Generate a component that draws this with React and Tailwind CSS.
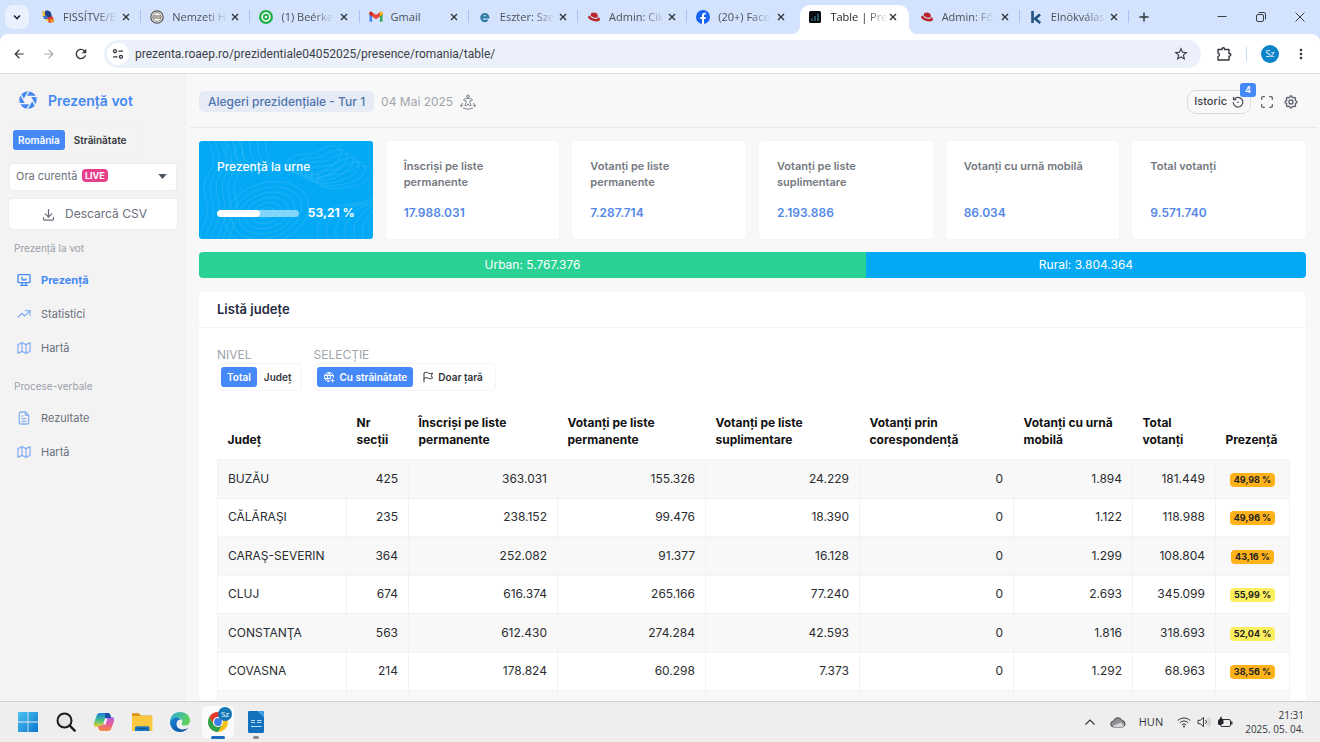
import { Fragment } from "react";
import {
  TbDeviceDesktopAnalytics,
  TbTrendingUp,
  TbMap,
  TbFileText,
  TbDownload,
  TbMaximize,
  TbSettings,
  TbWorldPlus,
} from "react-icons/tb";
import { FaRedhat } from "react-icons/fa";
import {
  MdArrowBack,
  MdArrowForward,
  MdRefresh,
  MdStarBorder,
  MdMoreVert,
} from "react-icons/md";

/* ---------- favicons ---------- */

const FlagIcon = () => (
  <svg viewBox="0 0 14 14" className="size-3.5">
    <path d="M1 1l4 1 1 4-4 1z" fill="#e8b93a" />
    <path d="M4 1c3-1 5 0 6 2l1 4-4 1-3-3z" fill="#1f3f8a" />
    <path d="M2 6l4 0 2 3-5 0z" fill="#3d6fc0" />
    <path d="M6 8l5-2 2 4-5 3z" fill="#d8392b" />
    <path d="M4 9l3 0 1 2-2 0z" fill="#f0c23f" />
    <path d="M9 9l4 0 0 3-4 1z" fill="#f08a2c" />
  </svg>
);

const SealIcon = () => (
  <svg viewBox="0 0 14 14" className="size-3.5">
    <circle cx="7" cy="7" r="6.2" fill="#f4f4f0" stroke="#555" strokeWidth="1.2" />
    <circle cx="7" cy="7" r="4.3" fill="none" stroke="#777" strokeWidth="0.8" />
    <path d="M3 6h8M3 8h8" stroke="#6b6250" strokeWidth="1" />
  </svg>
);

const TargetIcon = () => (
  <svg viewBox="0 0 14 14" className="size-3.5">
    <circle cx="7" cy="7" r="7" fill="#22b04b" />
    <circle cx="7" cy="7" r="3.9" fill="none" stroke="#fff" strokeWidth="1.5" />
    <circle cx="7" cy="7" r="1.3" fill="#fff" />
  </svg>
);

const GmailIcon = () => (
  <svg viewBox="0 0 14 14" className="size-3.5">
    <path d="M0.5 3.5v8.3h2.6V6z" fill="#4285f4" />
    <path d="M13.5 3.5v8.3h-2.6V6z" fill="#34a853" />
    <path d="M0.5 4.4V3.2c0-1.4 1.5-1.8 2.6-1L7 5l3.9-2.8c1.1-.8 2.6-.4 2.6 1v1.2L7 9.2z" fill="#ea4335" />
    <path d="M10.9 2.2c1.1-.8 2.6-.4 2.6 1v1.2L10.9 6.3z" fill="#fbbc04" />
    <path d="M3.1 2.2C2 1.4.5 1.8.5 3.2v1.2L3.1 6.3z" fill="#c5221f" />
  </svg>
);

const LetterE = () => (
  <svg viewBox="0 0 14 14" className="size-3.5">
    <path d="M3 7.3h7.3A3.5 3.5 0 1 0 9.5 9.8" fill="none" stroke="#2f7ba3" strokeWidth="2.2" />
  </svg>
);

const RedHat = () => (
  <span className="grid w-3.5 shrink-0 place-items-center">
    <FaRedhat className="size-3 text-[#b8262b]" />
  </span>
);

const FacebookIcon = () => (
  <svg viewBox="0 0 14 14" className="size-3.5">
    <circle cx="7" cy="7" r="7" fill="#1664f0" />
    <path d="M6 14V9H4.3V7H6V5.6C6 3.7 7 2.7 8.7 2.7c.6 0 1.1.1 1.1.1v1.7h-.8C8.2 4.5 8 5 8 5.6V7h1.8l-.3 2H8v5z" fill="#fff" />
  </svg>
);

const BarsIcon = () => (
  <svg viewBox="0 0 14 14" className="size-3.5">
    <rect x="1" y="1" width="12" height="12" rx="1.5" fill="#07090c" />
    <path d="M4 11V8.5M7 11V6M10 11V3.5" stroke="#2f7d8c" strokeWidth="1.3" />
  </svg>
);

const LetterK = () => (
  <svg viewBox="0 0 14 14" className="size-3.5">
    <path d="M3.5 1v12M11 4.5L6 8.7l5.3 4.3" fill="none" stroke="#24527e" strokeWidth="2.6" />
  </svg>
);

const tabs = [
  { title: "FISSÍTVE/E", Icon: FlagIcon, line: true },
  { title: "Nemzeti H", Icon: SealIcon, line: true },
  { title: "(1) Beérke", Icon: TargetIcon, line: true },
  { title: "Gmail", Icon: GmailIcon, line: true, full: true },
  { title: "Eszter: Sze", Icon: LetterE, line: true },
  { title: "Admin: Cik", Icon: RedHat, line: true },
  { title: "(20+) Face", Icon: FacebookIcon },
  { title: "Table | Pre", Icon: BarsIcon, active: true },
  { title: "Admin: Fő", Icon: RedHat, line: true },
  { title: "Elnökválas", Icon: LetterK, line: true },
];

function Tab({ title, Icon, active, line, full }) {
  const box = active ? "ml-1 mr-[2px] rounded-t-[10px] bg-white pl-[8px]" : "pl-[9px]";
  const text = active ? "text-[#1f2328]" : "text-[#4b5057]";
  const fade = full ? "" : "[mask-image:linear-gradient(to_right,#000_62%,transparent_102%)]";
  return (
    <div className={`relative flex min-w-0 flex-1 items-center pb-[6px] ${box}`}>
      <Icon />
      <span className="ml-[8px] w-[55px] shrink-0 whitespace-nowrap text-[11px] leading-4">
        <span className={`inline-block ${text} ${fade}`}>{title}</span>
      </span>
      <button aria-label={`Închide ${title}`} className="grid size-4 place-items-center">
        <svg viewBox="0 0 8 8" className="size-2">
          <path d="M1 1l6 6M7 1L1 7" stroke="#30353b" strokeWidth="1.4" />
        </svg>
      </button>
      {active && (
        <>
          <svg viewBox="0 0 8 8" className="absolute -left-2 bottom-0 size-2">
            <path d="M8 0v8H0A8 8 0 0 0 8 0z" fill="#fff" />
          </svg>
          <svg viewBox="0 0 8 8" className="absolute -right-2 bottom-0 size-2">
            <path d="M0 0v8h8A8 8 0 0 1 0 0z" fill="#fff" />
          </svg>
        </>
      )}
      {line && <span className="absolute right-0 top-[5px] h-[13px] w-px bg-[#a9c3f5]" />}
    </div>
  );
}

function Browser() {
  return (
    <header className="shrink-0 bg-[#d3e2fd] font-['Open_Sans','Noto_Sans',sans-serif]">
      <div className="flex h-[34px] pt-[5px]">
        <button
          aria-label="Caută file"
          className="ml-[5px] mr-[3px] grid size-6 shrink-0 place-items-center rounded-lg bg-[#e9f0fe]"
        >
          <svg viewBox="0 0 10 10" className="size-2.5">
            <path d="M2 3.5l3 3 3-3" fill="none" stroke="#1f2328" strokeWidth="1.6" />
          </svg>
        </button>
        <div className="flex min-w-0 max-w-[1097px] flex-1">
          {tabs.map((t, i) => (
            <Tab key={i} {...t} />
          ))}
        </div>
        <button aria-label="Filă nouă" className="ml-[3px] grid size-6 place-items-center">
          <svg viewBox="0 0 10 10" className="size-2.5">
            <path d="M5 .5v9M.5 5h9" stroke="#2b3036" strokeWidth="1.4" />
          </svg>
        </button>
        <div className="ml-auto flex items-center gap-[27px] pb-[6px] pr-[14px]">
          <button aria-label="Minimizează">
            <svg viewBox="0 0 12 12" className="size-3"><path d="M1.5 5.5h9" stroke="#3a3f45" /></svg>
          </button>
          <button aria-label="Restaurează">
            <svg viewBox="0 0 12 12" className="size-3" fill="none" stroke="#3a3f45">
              <rect x="1.5" y="3.5" width="7" height="7" rx="1.5" />
              <path d="M3.5 1.5H9a1.5 1.5 0 0 1 1.5 1.5v5.5" />
            </svg>
          </button>
          <button aria-label="Închide fereastra">
            <svg viewBox="0 0 12 12" className="size-3"><path d="M1.5 1.5l9 9M10.5 1.5l-9 9" stroke="#3a3f45" /></svg>
          </button>
        </div>
      </div>
      <div className="flex h-10 items-center rounded-t-lg border-b border-[#dfdfdf] bg-white">
        <button aria-label="Înapoi" className="ml-[11px] grid size-4 place-items-center"><MdArrowBack className="size-3.5 text-[#33383e]" /></button>
        <button aria-label="Înainte" className="ml-3.5 grid size-4 place-items-center"><MdArrowForward className="size-3.5 text-[#a7abb0]" /></button>
        <button aria-label="Reîncarcă" className="ml-4 grid size-4 place-items-center"><MdRefresh className="size-4 text-[#33383e]" /></button>
        <div className="ml-[15px] flex h-7 min-w-0 flex-1 items-center rounded-full bg-[#ebf0fa] pl-[3px] pr-3">
          <button aria-label="Informații despre site" className="grid size-[22px] shrink-0 place-items-center rounded-full bg-white">
            <svg viewBox="0 0 12 12" className="size-3" fill="none" stroke="#33383e" strokeWidth="1.3">
              <circle cx="3" cy="3.2" r="1.5" /><path d="M6.5 3.2H11M1 8.8h4.500" /><circle cx="9" cy="8.8" r="1.5" />
            </svg>
          </button>
          <input
            aria-label="Adresă"
            readOnly
            value="prezenta.roaep.ro/prezidentiale04052025/presence/romania/table/"
            className="ml-[6px] min-w-0 flex-1 bg-transparent font-['Roboto',sans-serif] text-[12px] text-[#3c4147] outline-none"
          />
          <button aria-label="Adaugă la marcaje"><MdStarBorder className="size-4 text-[#33383e]" /></button>
        </div>
        <button aria-label="Extensii" className="ml-[15px]">
          <svg viewBox="0 0 16 16" className="size-4" fill="none" stroke="#33383e" strokeWidth="1.4" strokeLinejoin="round">
            <path d="M2 3.5h4V3a1.300 1.300 0 0 1 2.600 0v.5h4.400v4h.5a1.300 1.300 0 0 1 0 2.600H13V14H2v-3.300a2 2 0 0 0 0-3.800z" />
          </svg>
        </button>
        <span className="ml-3.5 h-3.5 w-px bg-[#c7dafb]" />
        <button aria-label="Profil" className="ml-3.5 grid size-[18px] place-items-center rounded-full bg-[#0b84c9] text-[9px] text-white">Sz</button>
        <button aria-label="Meniu" className="ml-3.5 mr-[11px]"><MdMoreVert className="size-4 text-[#33383e]" /></button>
      </div>
    </header>
  );
}

/* ---------- sidebar ---------- */

const bladeAngles = [0, 60, 120, 180, 240, 300];

const Aperture = () => (
  <svg viewBox="0 0 18 18" className="size-[18px]">
    <circle cx="9" cy="9" r="8.7" fill="#4589f2" />
    <path d="M13.200 9L11.100 12.640H6.900L4.800 9L6.900 5.360H11.100z" fill="#f3f3f4" />
    {bladeAngles.map((a) => (
      <path key={a} d="M13.200 9L8 18" stroke="#f3f3f4" strokeWidth="1.400" transform={`rotate(${a} 9 9)`} />
    ))}
  </svg>
);

const groups = [
  {
    title: "Prezență la vot",
    items: [
      { label: "Prezență", Icon: TbDeviceDesktopAnalytics, active: true },
      { label: "Statistici", Icon: TbTrendingUp },
      { label: "Hartă", Icon: TbMap },
    ],
  },
  {
    title: "Procese-verbale",
    items: [
      { label: "Rezultate", Icon: TbFileText },
      { label: "Hartă", Icon: TbMap },
    ],
  },
];

function Sidebar() {
  return (
    <aside className="w-[186px] shrink-0 bg-[#f3f3f4] px-[9px] text-[#6a707b]">
      <a href="#acasa" className="ml-[10px] mt-[14px] flex h-6 items-center gap-[11px]">
        <Aperture />
        <span className="text-[14px] font-semibold text-[#4589f2]">Prezență vot</span>
      </a>
      <div className="mt-[14px] flex w-[129px] items-center rounded border border-[#f0f0f0] p-[3px] text-[10px] font-semibold leading-5">
        <button className="rounded-[3px] bg-[#4589f8] px-[5px] text-white">România</button>
        <button className="px-[9px] text-[#33373d]">Străinătate</button>
      </div>
      <div className="relative mt-[8px]">
        <select
          aria-label="Ora"
          className="h-7 w-full appearance-none rounded-[3px] border border-[#ededee] bg-white pl-[6px] pb-[2px] text-[11px] text-[#6a707b]"
        >
          <option>Ora curentă</option>
        </select>
        <span className="pointer-events-none absolute left-[73px] top-[7px] rounded-sm bg-[#e83e8c] px-[3px] text-[9px] font-bold leading-[13px] text-white">
          LIVE
        </span>
        <svg viewBox="0 0 10 6" className="pointer-events-none absolute right-[10px] top-[12px] h-[5px] w-[9px]">
          <path d="M0 0h10L5 6z" fill="#4b5260" />
        </svg>
      </div>
      <button className="mt-[8px] flex h-[30px] w-full items-center justify-center gap-[9px] rounded-[3px] bg-white pl-[2px] text-[12px] shadow-[0_0_1px_rgba(0,0,0,0.2)]">
        <TbDownload className="size-[15px]" />
        Descarcă CSV
      </button>
      <nav>
        {groups.map((g, i) => (
          <div key={g.title} className="mt-[7px] first:mt-[5px]">
            <h2 className="pl-[5px] text-[10px] leading-[29px] text-[#9ba0a9]">{g.title}</h2>
            {g.items.map(({ label, Icon, active }, j) => (
              <a
                key={j}
                href={`#${i}-${j}`}
                className={`flex h-[34px] items-center gap-[9px] pl-[7px] text-[11px] ${active ? "font-bold text-[#4589f2]" : ""}`}
              >
                <Icon className={`size-4 ${active ? "text-[#4589f2]" : "text-[#8cb3f0]"}`} />
                {label}
              </a>
            ))}
          </div>
        ))}
      </nav>
    </aside>
  );
}

/* ---------- main panel ---------- */

const Community = () => (
  <svg viewBox="0 0 16 16" className="size-4" fill="none" stroke="#80858d" strokeWidth="1" strokeLinecap="round" strokeLinejoin="round">
    <circle cx="8" cy="2.2" r="1.3" />
    <path d="M6.5 4.5c-1.3.1-2.4.6-2.9 1.1l.8 1.3 1.6-.4.2 1.8-1.3 3 1.4.5L8 9.8l1.7 2 1.4-.5-1.3-3 .2-1.800 1.600.4.8-1.300C11.900 5.100 10.800 4.600 9.500 4.500z" />
    <path d="M2.500 9.500C1.500 10 .8 10.800.8 11.600c0 .6.300 1 .8 1.400M.8 11.600l2-.4M13.500 9.500c1 .5 1.700 1.300 1.700 2.100 0 .6-.3 1-.8 1.400M15.200 11.600l-2-.4M3.500 14.200c1.200.5 2.800.9 4.500.9s3.300-.4 4.500-.9" />
  </svg>
);

const HistoryDot = () => (
  <svg viewBox="0 0 12 12" className="size-3" fill="none" stroke="#3f444b" strokeWidth="1.1" strokeLinecap="round">
    <path d="M2 3.5A4.800 4.800 0 1 1 1.200 6.500M1.500 1.300v2.500H4" />
    <circle cx="6" cy="6.2" r="0.8" fill="#3f444b" stroke="none" />
  </svg>
);

const WaveFlag = () => (
  <svg viewBox="0 0 12 12" className="size-3" fill="none" stroke="#33373d" strokeLinecap="round" strokeLinejoin="round">
    <path d="M2 11V2c1.500-1 3-.8 4.200 0s2.500.8 4.300 0L9.300 4.500l1.200 2.700c-1.800.8-3 .8-4.300 0S3.500 6.500 2 7.400" />
  </svg>
);

const Contours = () => (
  <svg
    viewBox="0 0 174 98"
    preserveAspectRatio="none"
    aria-hidden="true"
    className="absolute inset-0 size-full"
    fill="none"
    stroke="#fff"
    strokeOpacity="0.12"
    strokeWidth="0.9"
  >
    {[0, 1, 2, 3, 4, 5].map((i) => (
      <Fragment key={i}>
        <ellipse cx="68" cy="72" rx={8 + i * 7} ry={5 + i * 5} transform="rotate(-18 68 72)" />
        <path d={`M${90 + i * 6} ${18 + i * 4}c10-8 20-2 30-8s20-8 22 0-8 14-16 ${20 - i}-20 4-28 2-12-8-8-14z`} />
        <path d={`M${i * 6} 98c4-14 10-20 8-34s-6-20 2-32 4-20 0-32`} />
        <path d={`M${120 + i * 9} 98c-4-12 2-20 10-28s20-4 ${44 - i * 4}-12`} />
        <path d={`M${26 + i * 8} 0c4 10-2 14 6 20s16 2 ${22 + i * 2} 12`} />
      </Fragment>
    ))}
  </svg>
);

const stats = [
  ["Înscriși pe liste permanente", "17.988.031"],
  ["Votanți pe liste permanente", "7.287.714"],
  ["Votanți pe liste suplimentare", "2.193.886"],
  ["Votanți cu urnă mobilă", "86.034"],
  ["Total votanți", "9.571.740"],
];

const columns = [
  ["Județ", "w-[129px]"],
  ["Nr secții", "w-[62px]"],
  ["Înscriși pe liste permanente", "w-[149px]"],
  ["Votanți pe liste permanente", "w-[148px]"],
  ["Votanți pe liste suplimentare", "w-[154px]"],
  ["Votanți prin corespondență", "w-[154px]"],
  ["Votanți cu urnă mobilă", "w-[119px]"],
  ["Total votanți", "w-[83px]"],
  ["Prezență", "w-[74px]"],
];

const rows = [
  ["BUZĂU", "425", "363.031", "155.326", "24.229", "0", "1.894", "181.449", "49,98 %"],
  ["CĂLĂRAŞI", "235", "238.152", "99.476", "18.390", "0", "1.122", "118.988", "49,96 %"],
  ["CARAŞ-SEVERIN", "364", "252.082", "91.377", "16.128", "0", "1.299", "108.804", "43,16 %"],
  ["CLUJ", "674", "616.374", "265.166", "77.240", "0", "2.693", "345.099", "55,99 %"],
  ["CONSTANŢA", "563", "612.430", "274.284", "42.593", "0", "1.816", "318.693", "52,04 %"],
  ["COVASNA", "214", "178.824", "60.298", "7.373", "0", "1.292", "68.963", "38,56 %"],
  ["", "", "", "", "", "", "", "", ""],
];

function Segment({ label, children }) {
  return (
    <div>
      <div className="text-[12px] leading-4 text-[#a1a5ac]">{label}</div>
      <div className="flex rounded border border-[#f5f5f6] p-[3px] text-[10px] font-semibold leading-5">{children}</div>
    </div>
  );
}

function Panel() {
  return (
    <main className="min-w-0 flex-1 bg-[#f8f8f9]">
      <div className="ml-1 mr-[3px] flex h-[54px] items-center border-b border-[#e9e9ea] pl-[9px] pr-[18px] pt-[2px]">
        <span className="rounded-[5px] bg-[#e6ebf5] px-[9px] text-[12px] font-medium leading-[21px] text-[#4e74ae]">
          Alegeri prezidențiale - Tur 1
        </span>
        <span className="ml-[7px] mr-[7px] text-[12px] text-[#a1a5ac]">04 Mai 2025</span>
        <Community />
        <button className="relative ml-auto flex h-6 items-center gap-[5px] rounded-[9px] border border-[#dcdcde] px-[6px] text-[11px] font-medium text-[#3f444b]">
          Istoric
          <HistoryDot />
          <span className="absolute -right-[6px] -top-2 rounded-[3px] bg-[#4589f8] px-[5px] text-[9px] font-semibold leading-[14px] text-white">
            4
          </span>
        </button>
        <button aria-label="Ecran complet" className="ml-2"><TbMaximize className="size-4 text-[#5b616b]" /></button>
        <button aria-label="Setări" className="ml-2"><TbSettings className="size-4 text-[#5b616b]" /></button>
      </div>

      <div className="pl-[13px] pr-[14px] pt-[13px]">
        <section className="grid grid-cols-6 gap-[13px]">
          <div className="relative flex h-[98px] flex-col justify-between overflow-hidden rounded-[3px] bg-[#04a9f5] px-[18px] pb-[18px] pt-[18px] text-white">
            <Contours />
            <h2 className="relative text-[12px] font-medium leading-4">Prezență la urne</h2>
            <div className="relative flex items-center gap-[9px]">
              <div className="h-[7px] flex-1 overflow-hidden rounded bg-white/50">
                <div className="h-full rounded bg-white" style={{ width: "53.21%" }} />
              </div>
              <span className="text-[12px] font-bold leading-4">53,21 %</span>
            </div>
          </div>
          {stats.map(([name, value]) => (
            <div
              key={name}
              className="flex h-[98px] flex-col justify-between rounded-[3px] bg-white px-[18px] pb-[17px] pt-[17px] shadow-[0_0_2px_rgba(0,0,0,0.06)]"
            >
              <h2 className="text-[11px] font-semibold leading-4 text-[#74787f]">{name}</h2>
              <span className="text-[12px] font-semibold leading-[18px] text-[#5287e6]">{value}</span>
            </div>
          ))}
        </section>

        <div className="mt-[13px] flex h-[26px] overflow-hidden rounded text-center text-[12px] leading-[26px] text-white">
          <div className="bg-[#29d194]" style={{ width: "60.25%" }}>Urban: 5.767.376</div>
          <div className="flex-1 bg-[#04a9f5]">Rural: 3.804.364</div>
        </div>

        <section className="mt-[14px] rounded-[3px] bg-white shadow-[0_0_2px_rgba(0,0,0,0.06)]">
          <h1 className="border-b border-[#f3f3f4] px-[18px] text-[13px] font-semibold leading-[35px] text-[#262c3f]">Listă județe</h1>
          <div className="px-[18px] pt-[19px]">
            <div className="flex gap-[11px]">
              <Segment label="NIVEL">
                <button className="rounded-[3px] bg-[#4589f8] px-[6px] text-white">Total</button>
                <button className="px-[7px] text-[#33373d]">Județ</button>
              </Segment>
              <Segment label="SELECȚIE">
                <button className="flex items-center gap-1 rounded-[3px] bg-[#4589f8] px-[6px] text-white">
                  <TbWorldPlus className="size-3" />
                  Cu străinătate
                </button>
                <button className="flex items-center gap-1 px-[9px] text-[#33373d]">
                  <WaveFlag />
                  Doar țară
                </button>
              </Segment>
            </div>
            <table className="mt-[13px] w-full table-fixed border-collapse text-[12px]">
              <thead>
                <tr className="h-[55px] text-left align-bottom">
                  {columns.map(([name, width]) => (
                    <th key={name} className={`${width} pb-[11px] pl-[10px] pr-[5px] font-bold leading-[17px] text-[#111]`}>
                      {name}
                    </th>
                  ))}
                </tr>
              </thead>
              <tbody>
                {rows.map((r, i) => (
                  <tr key={i} className="border-t border-[#f3f3f4] odd:h-[39px] odd:bg-[#f8f8f8] even:h-[38px]">
                    {r.map((c, j) => (
                      <td
                        key={j}
                        className={`border-x border-[#f3f3f4] px-[10px] py-0 leading-5 text-[#2a2d31] ${
                          j === 0 ? "text-left" : j === 8 ? "text-center" : "text-right"
                        }`}
                      >
                        {j === 8 && c ? (
                          <span
                            className={`inline-block rounded-sm px-1 text-[9px] font-bold leading-[14px] text-[#222] ${
                              parseFloat(c) >= 50 ? "bg-[#fbef5f]" : "bg-[#ffb21a]"
                            }`}
                          >
                            {c}
                          </span>
                        ) : (
                          c
                        )}
                      </td>
                    ))}
                  </tr>
                ))}
              </tbody>
            </table>
          </div>
        </section>
      </div>
    </main>
  );
}

/* ---------- taskbar ---------- */

const WindowsIcon = () => (
  <svg viewBox="0 0 22 22" className="size-[22px]">
    <defs>
      <linearGradient id="win" x1="0" y1="0" x2="1" y2="1">
        <stop offset="0" stopColor="#4cc4f2" />
        <stop offset="1" stopColor="#0a76cf" />
      </linearGradient>
    </defs>
    <path d="M1 1h9.600v9.600H1zM11.400 1H21v9.600h-9.600zM1 11.400h9.600V21H1zM11.400 11.400H21V21h-9.600z" fill="url(#win)" />
  </svg>
);

const SearchIcon = () => (
  <svg viewBox="0 0 22 22" className="size-[22px]" fill="none" stroke="#1d1d1d" strokeWidth="2">
    <circle cx="9.500" cy="9.500" r="7" fill="#e3e5e7" />
    <path d="M14.700 14.700l5 5" strokeWidth="2.400" strokeLinecap="round" />
  </svg>
);

const CopilotIcon = () => (
  <svg viewBox="0 0 22 22" className="size-[22px]">
    <defs>
      <linearGradient id="cpa" x1="0" y1="0" x2="0" y2="1">
        <stop offset="0" stopColor="#1a7fe0" />
        <stop offset="0.500" stopColor="#3fc08a" />
        <stop offset="1" stopColor="#f5d12e" />
      </linearGradient>
      <linearGradient id="cpb" x1="0" y1="0" x2="0" y2="1">
        <stop offset="0" stopColor="#a765e6" />
        <stop offset="0.500" stopColor="#e85a9b" />
        <stop offset="1" stopColor="#fb8a3c" />
      </linearGradient>
    </defs>
    <path d="M7 2h8c1.500 0 2 1 2.500 2.500L18 7h-3c-2 0-2.500 1-3 2.500L10 16H4c-3 0-3.500-2-2.800-4.500L3.500 5C4.200 3 5 2 7 2z" fill="url(#cpa)" />
    <path d="M15 20H8c-1.500 0-2-1-2.500-2.500L5 15h3c1.500 0 2.300-1 2.700-2.500L12.500 6H18c3 0 3.500 2 2.800 4.500L18.500 17c-.7 2-1.500 3-3.500 3z" fill="url(#cpb)" />
    <path d="M12 2h3c1.500 0 2 1 2.500 2.500L18 7h-3c-1.500 0-2.300.5-2.800 2z" fill="#1b50a8" />
    <path d="M10.300 13l1.800-6 2.200.8-1.800 6.200z" fill="#fff" opacity="0.900" />
  </svg>
);

const FolderIcon = () => (
  <svg viewBox="0 0 22 22" className="size-[22px]">
    <path d="M1 3.500C1 2.700 1.600 2 2.500 2h5L10 4.500h10.500v6H1z" fill="#d99a1c" />
    <rect x="1" y="5" width="20.500" height="15" rx="1" fill="#fcc83e" />
    <path d="M4 20v-3c0-1 .8-1.800 1.800-1.800h10.900c1 0 1.800.8 1.800 1.800v3z" fill="#1875bd" />
    <path d="M6.500 17.500h9.500" stroke="#0d5892" />
  </svg>
);

const EdgeIcon = () => (
  <svg viewBox="0 0 22 22" className="size-[22px]">
    <defs>
      <linearGradient id="eda" x1="0" y1="0" x2="1" y2="0.300">
        <stop offset="0" stopColor="#2aa9e0" />
        <stop offset="1" stopColor="#5fd35d" />
      </linearGradient>
      <linearGradient id="edb" x1="0" y1="0" x2="1" y2="1">
        <stop offset="0" stopColor="#1b86d6" />
        <stop offset="1" stopColor="#0b4a94" />
      </linearGradient>
    </defs>
    <path d="M1 11C1 5 5.500 1 11 1c6 0 10 4 10 8.500 0 3-2 5-5 5-2 0-3.500-.8-3.500-1.800 0-.7.900-1 .9-2.400C13.400 8.500 11.500 7 9 7c-4 0-7 2-8 4z" fill="url(#eda)" />
    <path d="M1 11c1-2.500 3.500-4.200 6.500-4.200 2 0 3.500.6 4.500 1.700-3 0-4.500 2-4.500 4.500 0 3 2.500 5.500 6 5.500 2.500 0 4.300-.8 5.800-1.700C17.500 19.300 14.500 21 11 21 5.500 21 1 17 1 11z" fill="url(#edb)" />
  </svg>
);

const ChromeIcon = () => (
  <svg viewBox="0 0 22 22" className="size-[22px]">
    <circle cx="11" cy="11" r="10" fill="#fbc116" />
    <path d="M2.340 6A10 10 0 0 1 19.660 6H11a5 5 0 0 0-4.330 7.500z" fill="#e33b2e" />
    <path d="M2.340 6A10 10 0 0 0 11 21l4.330-7.500a5 5 0 0 1-8.660 0z" fill="#2ba24c" />
    <circle cx="11" cy="11" r="5" fill="#fff" />
    <circle cx="11" cy="11" r="3.900" fill="#3f7fea" />
  </svg>
);

const WriterIcon = () => (
  <svg viewBox="0 0 22 22" className="size-[22px]">
    <path d="M3.500 0H13l6 6v14.500c0 .8-.6 1.500-1.500 1.500h-13C3.600 22 3 21.300 3 20.500V1.500z" fill="#1370bd" />
    <path d="M13 0l6 6V1c0-.5-.4-1-1-1z" fill="#3a9be2" />
    <path d="M6 9.500h4M6 11.500h4M12 9.500h4.500M12 11.500h4.500M6 15.500h10.500" stroke="#b7dcf7" />
  </svg>
);

const apps = [
  ["Start", WindowsIcon],
  ["Căutare", SearchIcon],
  ["Copilot", CopilotIcon],
  ["Explorer", FolderIcon],
  ["Edge", EdgeIcon],
  ["Chrome", ChromeIcon],
  ["Writer", WriterIcon],
];

function Taskbar() {
  return (
    <footer className="flex h-[41px] shrink-0 items-center border-t border-[#d0d0d0] bg-[#eeeeee] pl-[9px] pr-4 font-['Open_Sans','Noto_Sans',sans-serif] text-[#33363a]">
      {apps.map(([name, Icon]) => (
        <button key={name} aria-label={name} className="relative grid h-full w-[38px] place-items-center">
          {name === "Chrome" && <span className="absolute inset-x-[3px] inset-y-1 rounded bg-[#fafafa]" />}
          <span className="relative"><Icon /></span>
          {name === "Chrome" && (
            <>
              <span className="absolute right-[5px] top-[5px] grid size-[14px] place-items-center rounded-full bg-[#1577b5] text-[8px] leading-none text-white">Sz</span>
              <span className="absolute bottom-[3px] h-[3px] w-[14px] rounded-full bg-[#1a6cc0]" />
            </>
          )}
          {name === "Writer" && <span className="absolute bottom-[3px] h-[3px] w-[6px] rounded-full bg-[#8a8a8a]" />}
        </button>
      ))}
      <div className="ml-auto flex items-center">
        <svg viewBox="0 0 12 12" className="size-3" fill="none" stroke="#33363a" strokeWidth="1.200"><path d="M1.500 8.500L6 4l4.500 4.500" /></svg>
        <svg viewBox="0 0 16 12" className="ml-[14px] h-3 w-4">
          <path d="M4 11a3 3 0 0 1-.5-6A4.500 4.500 0 0 1 12 4.500 3.300 3.300 0 0 1 12.500 11z" fill="#8e9093" stroke="#45484c" />
          <path d="M2.500 10L11 6.500l3 3-1.500 1.500H4z" fill="#d5d6d8" />
        </svg>
        <span className="ml-[13px] text-[11px] leading-4">HUN</span>
        <svg viewBox="0 0 14 12" className="ml-[14px] h-3 w-3.5" fill="none" stroke="#33363a">
          <path d="M.8 4.500a8.800 8.800 0 0 1 12.400 0M2.800 6.700a6 6 0 0 1 8.400 0M4.800 8.800a3.100 3.100 0 0 1 4.400 0" />
          <circle cx="7" cy="10.500" r="1" fill="#33363a" stroke="none" />
        </svg>
        <svg viewBox="0 0 14 12" className="ml-[6px] h-3 w-3.5" fill="none" stroke="#33363a">
          <path d="M1 4.300h2.200L6.500 1.500v9L3.200 7.700H1z" />
          <path d="M8.500 4a2.800 2.800 0 0 1 0 4" />
          <path d="M10 2.500a5 5 0 0 1 0 7M11.500 1.200a7 7 0 0 1 0 9.600" stroke="#bbbdc0" />
        </svg>
        <svg viewBox="0 0 16 12" className="ml-[6px] h-3 w-4">
          <rect x="3.500" y="3.500" width="10" height="7" rx="1.500" fill="none" stroke="#33363a" />
          <path d="M14 5.500h1.500v3H14z" fill="#33363a" />
          <path d="M1 8.500V4.500L3 2.500 4 0l1 2.500 1.500 2v3L4 9H2.500z" fill="#222529" />
        </svg>
        <div className="ml-3 text-right text-[10px] leading-[14px]">
          <div>21:31</div>
          <div>2025. 05. 04.</div>
        </div>
      </div>
    </footer>
  );
}

export default function App() {
  return (
    <div className="flex h-screen flex-col overflow-hidden bg-[#f8f8f9] font-['Inter',sans-serif]">
      <Browser />
      <div className="flex min-h-0 flex-1 overflow-hidden">
        <Sidebar />
        <Panel />
      </div>
      <Taskbar />
    </div>
  );
}
